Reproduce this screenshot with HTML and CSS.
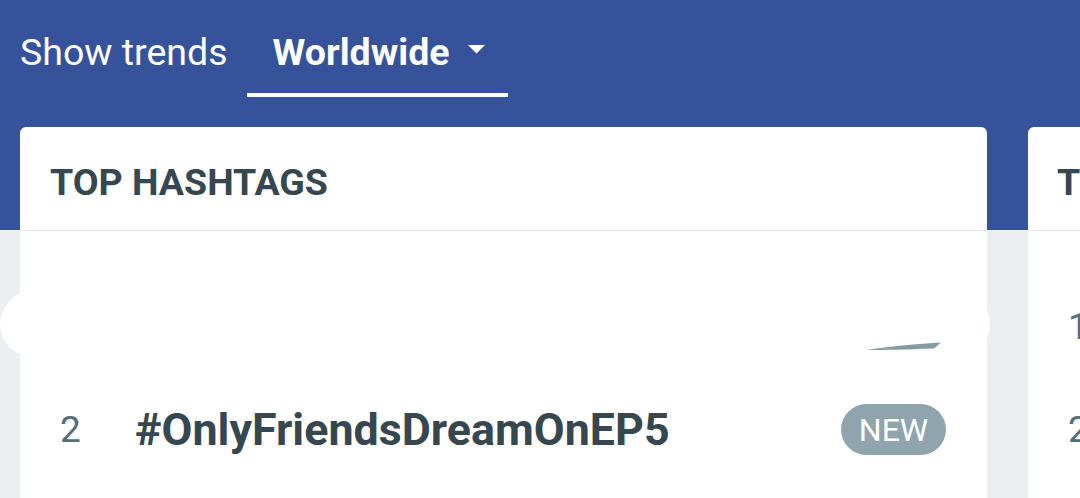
FILE: index.html
```html
<!DOCTYPE html>
<html>
<head>
<meta charset="utf-8">
<link rel="stylesheet" href="styles.css">
</head>
<body>
<header class="topbar">
  <div class="tabs">
    <span class="label">Show trends</span>
    <span class="tab">Worldwide<svg class="caret" width="17" height="9" viewBox="0 0 17 9"><path d="M0 0H17L8.5 8.5Z" fill="#fff"/></svg></span>
  </div>
</header>
<main class="cards">
  <section class="card main-card">
    <h2 class="card-title">TOP HASHTAGS</h2>
    <ol class="rows">
      <li class="row"><span class="num">1</span><span class="tag">#Trending</span></li>
      <li class="row"><span class="num">2</span><span class="tag">#OnlyFriendsDreamOnEP5</span><span class="badge">NEW</span></li>
    </ol>
  </section>
  <section class="card side-card">
    <h2 class="card-title">TOP TOPICS</h2>
    <ol class="rows">
      <li class="row"><span class="num">1</span></li>
      <li class="row"><span class="num">2</span></li>
    </ol>
  </section>
</main>
<div class="overlay-pill"></div>
<svg class="sliver" width="80" height="12" viewBox="0 0 80 12"><path d="M0 9 C12 7 32 4 74 1.5 L67 7.5 C40 8.5 15 9 0 9Z" fill="#859aa5"/></svg>
</body>
</html>
```
FILE: styles.css
```css
* { box-sizing: border-box; }
html, body { margin: 0; padding: 0; }
body {
  width: 1080px;
  height: 498px;
  overflow: hidden;
  background: #eceff1;
  font-family: Roboto, "Noto Sans", sans-serif;
  position: relative;
}
.topbar {
  background: #36529b;
  padding: 30px 0 30px 20px;
}
.tabs {
  display: flex;
  align-items: flex-start;
  gap: 19px;
  color: #fff;
  font-size: 37.5px;
  line-height: 44px;
}
.label { font-weight: 400; }
.tab {
  display: flex;
  align-items: center;
  font-weight: 700;
  padding: 0 23px 19px 26px;
  border-bottom: 4px solid #fff;
}
.caret { margin-left: 18px; margin-top: -6px; }
.cards {
  display: flex;
  gap: 41px;
  padding-left: 20px;
  background: linear-gradient(#36529b 103px, #eceff1 103px);
  height: 371px;
}
.card {
  background: #fff;
  border-radius: 6px 6px 0 0;
  flex-shrink: 0;
}
.main-card { width: 967px; }
.side-card { width: 300px; }
.card-title {
  margin: 0;
  padding: 8px 0 0 30px;
  line-height: 95px;
  height: 104px;
  font-size: 37.5px;
  font-weight: 700;
  color: #37474f;
  border-bottom: 1px solid #e6e8ea;
  white-space: nowrap;
}
.side-card .card-title { padding-left: 29px; }
.rows {
  list-style: none;
  margin: 0;
  padding: 44px 0 0 0;
}
.row {
  height: 103px;
  display: flex;
  align-items: center;
  padding: 0 41px 0 40px;
}
.num {
  width: 75px;
  font-size: 37px;
  color: #546e7a;
  flex-shrink: 0;
}
.tag {
  font-size: 44.8px;
  font-weight: 700;
  color: #37474f;
  flex: 1;
  white-space: nowrap;
}
.badge {
  width: 105px;
  height: 51px;
  border-radius: 26px;
  background: #90a4ae;
  color: #fff;
  font-size: 32px;
  display: flex;
  align-items: center;
  justify-content: center;
}
.overlay-pill {
  position: absolute;
  left: 0;
  top: 291px;
  width: 990px;
  height: 66px;
  border-radius: 33px;
  background: #fff;
}
.sliver {
  position: absolute;
  left: 867px;
  top: 341px;
}
```
